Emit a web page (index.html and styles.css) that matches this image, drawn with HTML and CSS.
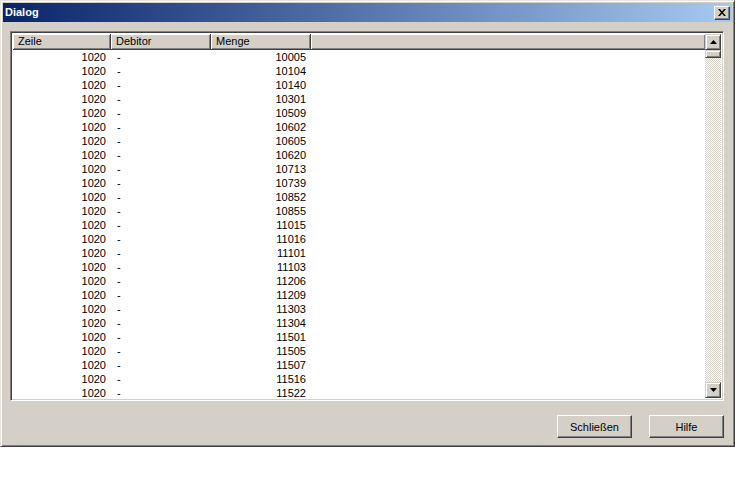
FILE: index.html
```html
<!DOCTYPE html>
<html>
<head>
<meta charset="utf-8">
<link rel="stylesheet" href="styles.css">
</head>
<body>
<div class="window">
  <div class="titlebar">
    <span class="title">Dialog</span>
    <div class="close">
      <svg width="8" height="7" viewBox="0 0 8 7"><path d="M0 0h2l2 2.5L6 0h2L5 3.5 8 7H6L4 4.5 2 7H0l3-3.5z" fill="#000"/></svg>
    </div>
  </div>
  <div class="body">
    <div class="listview">
      <div class="grid">
        <div class="header">
          <div class="hcell c1">Zeile</div>
          <div class="hcell c2">Debitor</div>
          <div class="hcell c3">Menge</div>
          <div class="hcell filler"></div>
        </div>
        <div class="rows">
          <div class="row"><span class="c1 num">1020</span><span class="c2">-</span><span class="c3 num">10005</span></div>
          <div class="row"><span class="c1 num">1020</span><span class="c2">-</span><span class="c3 num">10104</span></div>
          <div class="row"><span class="c1 num">1020</span><span class="c2">-</span><span class="c3 num">10140</span></div>
          <div class="row"><span class="c1 num">1020</span><span class="c2">-</span><span class="c3 num">10301</span></div>
          <div class="row"><span class="c1 num">1020</span><span class="c2">-</span><span class="c3 num">10509</span></div>
          <div class="row"><span class="c1 num">1020</span><span class="c2">-</span><span class="c3 num">10602</span></div>
          <div class="row"><span class="c1 num">1020</span><span class="c2">-</span><span class="c3 num">10605</span></div>
          <div class="row"><span class="c1 num">1020</span><span class="c2">-</span><span class="c3 num">10620</span></div>
          <div class="row"><span class="c1 num">1020</span><span class="c2">-</span><span class="c3 num">10713</span></div>
          <div class="row"><span class="c1 num">1020</span><span class="c2">-</span><span class="c3 num">10739</span></div>
          <div class="row"><span class="c1 num">1020</span><span class="c2">-</span><span class="c3 num">10852</span></div>
          <div class="row"><span class="c1 num">1020</span><span class="c2">-</span><span class="c3 num">10855</span></div>
          <div class="row"><span class="c1 num">1020</span><span class="c2">-</span><span class="c3 num">11015</span></div>
          <div class="row"><span class="c1 num">1020</span><span class="c2">-</span><span class="c3 num">11016</span></div>
          <div class="row"><span class="c1 num">1020</span><span class="c2">-</span><span class="c3 num">11101</span></div>
          <div class="row"><span class="c1 num">1020</span><span class="c2">-</span><span class="c3 num">11103</span></div>
          <div class="row"><span class="c1 num">1020</span><span class="c2">-</span><span class="c3 num">11206</span></div>
          <div class="row"><span class="c1 num">1020</span><span class="c2">-</span><span class="c3 num">11209</span></div>
          <div class="row"><span class="c1 num">1020</span><span class="c2">-</span><span class="c3 num">11303</span></div>
          <div class="row"><span class="c1 num">1020</span><span class="c2">-</span><span class="c3 num">11304</span></div>
          <div class="row"><span class="c1 num">1020</span><span class="c2">-</span><span class="c3 num">11501</span></div>
          <div class="row"><span class="c1 num">1020</span><span class="c2">-</span><span class="c3 num">11505</span></div>
          <div class="row"><span class="c1 num">1020</span><span class="c2">-</span><span class="c3 num">11507</span></div>
          <div class="row"><span class="c1 num">1020</span><span class="c2">-</span><span class="c3 num">11516</span></div>
          <div class="row"><span class="c1 num">1020</span><span class="c2">-</span><span class="c3 num">11522</span></div>
        </div>
      </div>
      <div class="scrollbar">
        <div class="sbtn"><svg width="7" height="4" viewBox="0 0 7 4"><path d="M3.5 0L7 4H0z" fill="#000"/></svg></div>
        <div class="thumb"></div>
        <div class="track"></div>
        <div class="sbtn"><svg width="7" height="4" viewBox="0 0 7 4"><path d="M0 0h7L3.5 4z" fill="#000"/></svg></div>
      </div>
    </div>
    <div class="footer">
      <div class="btn">Schließen</div>
      <div class="btn">Hilfe</div>
    </div>
  </div>
</div>
</body>
</html>
```
FILE: styles.css
```css
html, body {
  margin: 0;
  padding: 0;
  background: #fff;
}
body {
  font-family: "Liberation Sans", Arial, sans-serif;
  font-size: 11px;
  color: #000;
}
.window {
  width: 735px;
  height: 447px;
  box-sizing: border-box;
  background: #d4d0c8;
  border: 1px solid;
  border-color: #e8e6e0 #404040 #404040 #e8e6e0;
  box-shadow: inset 1px 1px #fff, inset -1px -1px #808080;
  padding: 2px 2px 2px 2px;
  display: flex;
  flex-direction: column;
}
.titlebar {
  height: 19px;
  flex: none;
  background: linear-gradient(to right, #0a246a, #a6caf0);
  display: flex;
  align-items: center;
  justify-content: space-between;
  padding: 0 2px 0 2px;
}
.title {
  color: #fff;
  font-weight: bold;
  font-size: 11px;
  line-height: 19px;
}
.close {
  width: 16px;
  height: 14px;
  box-sizing: border-box;
  background: #d4d0c8;
  border: 1px solid;
  border-color: #fff #404040 #404040 #fff;
  box-shadow: inset -1px -1px #808080;
  display: flex;
  align-items: center;
  justify-content: center;
  padding-right: 1px;
}
.body {
  flex: 1;
  display: flex;
  flex-direction: column;
  padding: 9px 8px 6px 7px;
}
.listview {
  width: 714px;
  height: 370px;
  box-sizing: border-box;
  border: 1px solid;
  border-color: #808080 #fff #fff #808080;
  box-shadow: inset 1px 1px #404040, inset -1px -1px #d4d0c8;
  padding: 2px;
  background: #fff;
  display: flex;
}
.grid {
  flex: 1;
  display: flex;
  flex-direction: column;
  overflow: hidden;
}
.header {
  display: flex;
  height: 16px;
  flex: none;
}
.hcell {
  box-sizing: border-box;
  height: 16px;
  background: #d4d0c8;
  border-right: 1px solid #404040;
  border-bottom: 1px solid #404040;
  box-shadow: inset 1px 1px #fff, inset -1px -1px #808080;
  padding-left: 5px;
  line-height: 15px;
}
.c1 { width: 98px; }
.c2 { width: 100px; }
.c3 { width: 100px; }
.hcell.filler { flex: 1; border-right: none; }
.rows {
  display: flex;
  flex-direction: column;
}
.row {
  display: flex;
  height: 14px;
  line-height: 14px;
}
.row span {
  box-sizing: border-box;
  display: block;
}
.row .num {
  text-align: right;
  padding-right: 5px;
}
.row .c2 {
  padding-left: 6px;
}
.scrollbar {
  width: 16px;
  flex: none;
  display: flex;
  flex-direction: column;
  background: repeating-conic-gradient(#d4d0c8 0 25%, #fff 0 50%) 0 0 / 2px 2px;
}
.sbtn, .thumb {
  box-sizing: border-box;
  width: 16px;
  height: 16px;
  flex: none;
  background: #d4d0c8;
  border: 1px solid;
  border-color: #d4d0c8 #404040 #404040 #d4d0c8;
  box-shadow: inset 1px 1px #fff, inset -1px -1px #808080;
  display: flex;
  align-items: center;
  justify-content: center;
}
.thumb {
  height: 8px;
}
.track {
  flex: 1;
}
.footer {
  display: flex;
  justify-content: flex-end;
  gap: 17px;
  margin-top: auto;
  padding-right: 0;
}
.btn {
  width: 75px;
  height: 23px;
  box-sizing: border-box;
  background: #d4d0c8;
  border: 1px solid;
  border-color: #fff #404040 #404040 #fff;
  box-shadow: inset -1px -1px #808080;
  display: flex;
  align-items: center;
  justify-content: center;
  font-size: 11px;
}
```
